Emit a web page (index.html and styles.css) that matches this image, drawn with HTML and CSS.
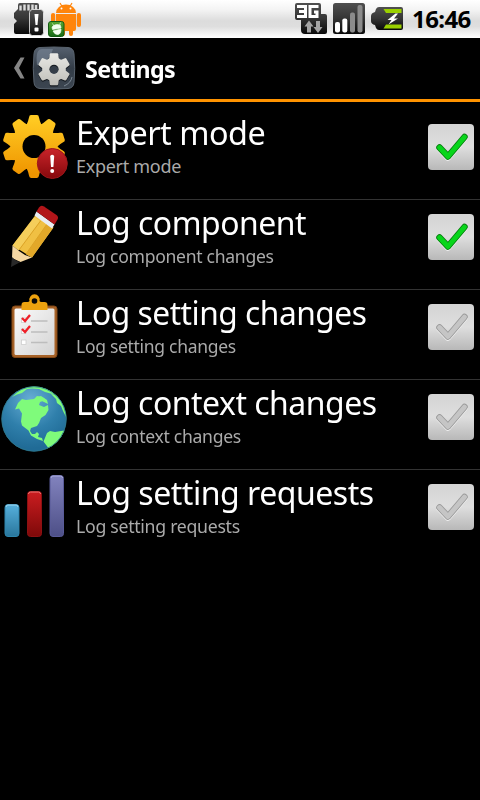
FILE: index.html
```html
<!DOCTYPE html>
<html lang="en">
<head>
<meta charset="utf-8">
<title>Settings</title>
<link rel="stylesheet" href="styles.css">
</head>
<body>
<header class="status">
  <svg class="status-left" width="90" height="38" viewBox="0 0 90 38">
    <defs>
      <linearGradient id="dark" x2="0" y2="1"><stop stop-color="#505050"/><stop offset=".5" stop-color="#343434"/><stop offset="1" stop-color="#080808"/></linearGradient>
      <linearGradient id="leaf" x2="0" y2="1"><stop stop-color="#57a832"/><stop offset="1" stop-color="#176b17"/></linearGradient>
    </defs>
    <path d="M20 3h17q2 0 2 2v27q0 2-2 2H16q-2 0-2-2V24l3-3-3-3v-5l4-4V5q0-2 2-2z" fill="url(#dark)"/>
    <path d="M20.500 5.500v5M24.500 4.500v6M28.500 4.500v6M32.500 4.500v6M36 5v5" stroke="#ddd" stroke-width="2.400"/>
    <rect x="29.500" y="9.500" width="14" height="26" rx="3" fill="url(#dark)" stroke="#eee" stroke-width=".8"/>
    <path d="M34.500 14h4l-1 11h-2z" fill="#fff"/><rect x="34.500" y="27.500" width="4" height="4" rx="1" fill="#fff"/>
    <g fill="#ff850b">
      <path d="M56 13a10 8.500 0 0 1 20 0z"/>
      <path d="M60 3l3 5M72 3l-3 5" stroke="#ff850b" stroke-width="1.200"/>
      <path d="M56 14h20v15q0 2-2 2h-1v3q0 2-2 2t-2-2v-3h-4v3q0 2-2 2t-2-2v-3h-3q-2 0-2-2z"/>
      <rect x="51" y="13" width="4.200" height="14" rx="2.100"/><rect x="76.800" y="13" width="4.200" height="14" rx="2.100"/>
    </g>
    <circle cx="61.500" cy="8.500" r="1" fill="#fff"/><circle cx="70.500" cy="8.500" r="1" fill="#fff"/>
    <rect x="48.500" y="21.500" width="15.500" height="15" rx="2.500" fill="url(#leaf)" stroke="#125a12"/>
    <path d="M52 27q4-4 8.500-1.500l.5 2.500-8.500 1.500zM53 31l8-2q0 5-3 5.500t-5-3.500zM52.500 23.500l1.500 2.500M60.500 22.500l-1 3" fill="#f4fff0" stroke="#f4fff0" stroke-width=".7"/>
  </svg>
  <div class="status-right">
    <svg width="112" height="38" viewBox="292 0 112 38">
      <path d="M297 3h22q2 0 2 2v9h4q2 0 2 2v16q0 2-2 2h-20q-4 0-4-4V20h-4q-2 0-2-2V5q0-2 2-2z" fill="url(#dark)"/>
      <path d="M297 6.500h8.500v10H297M299 11.500h6.500M318.500 6.500h-8.500v10h7v-4.500h-3" fill="none" stroke="#fff" stroke-width="3"/>
      <path d="M309 20.500l4.500 6h-2.500v6h-4v-6h-2.500zM318 33l4.500-6h-2.500v-6h-4v6h-2.500z" fill="#a5a5a5"/>
      <rect x="333" y="3" width="32" height="31" rx="2.500" fill="url(#dark)"/>
      <g fill="#fff"><rect x="335" y="22" width="5" height="10.500" rx="2"/><rect x="342.300" y="18.500" width="5" height="14" rx="2"/></g>
      <g fill="#8b8b8b"><rect x="350" y="12.500" width="5" height="20" rx="2"/><rect x="357.500" y="5" width="5" height="27.500" rx="2"/></g>
      <path d="M379 7h22q2 0 2 2v19q0 2-2 2h-22q-2 0-3-2l-1-3q-4-1-4-4v-5q0-3 4-4l1-3q1-2 3-2z" fill="url(#dark)"/>
      <path d="M383.500 9h18v4h-15.500zM386 24.500h15.500v4h-18z" fill="#9ad000"/>
      <path d="M395.500 13.500l-8 6.500h4l-3 4.500 9.500-6h-4l4-5z" fill="#fff"/>
    </svg>
    <span class="clock">16:46</span>
  </div>
</header>

<nav class="bar">
  <svg width="78" height="61" viewBox="0 38 78 61">
    <defs>
      <linearGradient id="tile" x2="0" y2="1"><stop stop-color="#56616f"/><stop offset=".5" stop-color="#333c47"/><stop offset="1" stop-color="#3c4651"/></linearGradient>
      <linearGradient id="silver" x2="0" y2="1"><stop stop-color="#eeeeea"/><stop offset="1" stop-color="#b9b9b3"/></linearGradient>
      <mask id="gear6" maskUnits="userSpaceOnUse" x="-20" y="-20" width="40" height="40">
        <g fill="#fff"><circle r="11.800"/>
          <path id="t6" d="M-5-9l.8-6q.2-1 1-1h6.400q.8 0 1 1l.8 6z"/>
          <use href="#t6" transform="rotate(60)"/><use href="#t6" transform="rotate(120)"/><use href="#t6" transform="rotate(180)"/><use href="#t6" transform="rotate(240)"/><use href="#t6" transform="rotate(300)"/>
        </g><circle r="4.600" fill="#000"/>
      </mask>
    </defs>
    <path d="M24.500 57.500h-4L14 68l6.500 10.500h4L19 68z" fill="#858585"/>
    <path d="M40 47.500q14-1 28 0 5.500.5 6 6 1.500 15 0 29-.5 5.500-6 6-14 1-28 0-5.500-.5-6-6-1.500-14 0-29 .5-5.500 6-6z" fill="url(#tile)" stroke="#59636e"/>
    <path d="M37 65q-2-16 5-16h11q-3 12-16 16z" fill="#7b8999" opacity=".6"/>
    <path d="M64 86q7-3 8-9" fill="none" stroke="#7b8792" stroke-width="1"/>
    <g transform="translate(54 70.500)"><rect x="-20" y="-20" width="40" height="40" fill="#171c22" mask="url(#gear6)"/></g>
    <g transform="translate(54 69.300)"><rect x="-20" y="-20" width="40" height="40" fill="url(#silver)" mask="url(#gear6)"/></g>
  </svg>
  <h1>Settings</h1>
</nav>

<ul class="list">
  <li class="row">
    <svg class="icon" width="72" height="89" viewBox="0 110 72 89">
      <defs>
        <linearGradient id="gold" x2="0" y2="1"><stop offset=".1" stop-color="#ffca22"/><stop offset=".9" stop-color="#ef9500"/></linearGradient>
        <linearGradient id="red" x2="0" y2="1"><stop stop-color="#c9242a"/><stop offset="1" stop-color="#85080c"/></linearGradient>
        <mask id="gear10" maskUnits="userSpaceOnUse" x="-34" y="-34" width="68" height="68">
          <g fill="#fff"><circle r="23.500"/>
            <path id="t10" d="M-7.500-21.500Q-5.800-25-5-29q.3-2.400 2-2.400h6q1.700 0 2 2.400.8 4 2.500 7.500z"/>
            <use href="#t10" transform="rotate(36)"/><use href="#t10" transform="rotate(72)"/><use href="#t10" transform="rotate(108)"/><use href="#t10" transform="rotate(144)"/><use href="#t10" transform="rotate(180)"/><use href="#t10" transform="rotate(216)"/><use href="#t10" transform="rotate(252)"/><use href="#t10" transform="rotate(288)"/><use href="#t10" transform="rotate(324)"/>
          </g><circle r="11.500" fill="#000"/>
        </mask>
      </defs>
      <g transform="translate(34 146.500)"><rect x="-34" y="-34" width="68" height="68" fill="url(#gold)" mask="url(#gear10)"/></g>
      <circle cx="52.300" cy="163.500" r="15" fill="url(#red)" stroke="#a0171b"/>
      <path d="M50.200 156q2-2.500 4 0l-.8 11h-2.400z" fill="#fff"/><circle cx="52.200" cy="171" r="2" fill="#fff"/>
    </svg>
    <div class="text"><div class="title w1">Expert mode</div><div class="sub s1">Expert mode</div></div>
    <svg class="check on" width="46" height="46" viewBox="0 0 46 46"><path class="lip" d="M11.500 24.500l8.500 9L36.500 14"/><path class="edge" d="M11.500 23.500l8.500 9L36.500 13"/><path class="tick" d="M11.500 23.500l8.500 9L36.500 13"/></svg>
  </li>
  <li class="row">
    <svg class="icon" width="72" height="89" viewBox="0 200 72 89">
      <path d="M35.500 215L53.500 227.500 32 257.500 12.500 245.500z" fill="#f0c043"/>
      <path d="M34.500 217l5.500 4-21.500 29.500-6-5z" fill="#f5ce5b"/><path d="M47 224l6 4-21 29.500-6-3z" fill="#e2a829"/><path d="M40.500 221L19 250M47 224L26 254" stroke="#dca326" stroke-width="1"/>
      <path d="M12.500 245.500l6.500 5.500 6 4 7 2.500-11.500 4.500-8.500-4z" fill="#f5d7a3"/>
      <path d="M12 257q4 4.500 8.500 5L11 267z" fill="#292929"/>
      <path d="M34.500 215.500l2-4 18 13-2.500 4z" fill="#e9ecf2"/>
      <path d="M36.500 211.500l2.500-4q2-3 5-1l12.500 8.500q2.500 2 1 4.500l-3 5z" fill="#b21519"/>
    </svg>
    <div class="text"><div class="title w2">Log component</div><div class="sub s2">Log component changes</div></div>
    <svg class="check on" width="46" height="46" viewBox="0 0 46 46"><path class="lip" d="M11.500 24.500l8.500 9L36.500 14"/><path class="edge" d="M11.500 23.500l8.500 9L36.500 13"/><path class="tick" d="M11.500 23.500l8.500 9L36.500 13"/></svg>
  </li>
  <li class="row">
    <svg class="icon" width="72" height="89" viewBox="0 290 72 89">
      <defs><linearGradient id="paper" x2="1" y2="1"><stop stop-color="#fafafa"/><stop offset="1" stop-color="#d3d3d3"/></linearGradient></defs>
      <rect x="12" y="306" width="45" height="51.500" rx="3" fill="#a66228" stroke="#804615"/>
      <rect x="14.500" y="308.500" width="40" height="46.500" rx="1.500" fill="url(#paper)"/>
      <path d="M21.500 310v-5q0-3 3-3h3q1.500 0 2-1a5.200 5.200 0 1 1 10 0q.5 1 2 1h3q3 0 3 3v5z" fill="#eda20f"/>
      <circle cx="34.500" cy="301" r="2.800" fill="#090909"/>
      <path d="M31 321h16.500M31 332h16.500M31 342.500h16.500" stroke="#bdbdbd" stroke-width="1.500"/>
      <g fill="#fff" stroke="#c9c9c9" stroke-width=".7"><rect x="21.500" y="318" width="4.500" height="4.500"/><rect x="21.500" y="329" width="4.500" height="4.500"/><rect x="21.500" y="340" width="4.500" height="4.500"/></g>
      <path d="M22 318l3 3 5-6M22 329l3 3 5-6" fill="none" stroke="#ef2029" stroke-width="2.300"/>
    </svg>
    <div class="text"><div class="title w3">Log setting changes</div><div class="sub s3">Log setting changes</div></div>
    <svg class="check" width="46" height="46" viewBox="0 0 46 46"><path class="lip" d="M11.500 24.500l8.500 9L36.500 14"/><path class="edge" d="M11.500 23.500l8.500 9L36.500 13"/><path class="tick" d="M11.500 23.500l8.500 9L36.500 13"/></svg>
  </li>
  <li class="row">
    <svg class="icon" width="72" height="89" viewBox="0 380 72 89">
      <defs><radialGradient id="sea" cx=".45" cy=".2" r=".75"><stop stop-color="#67add5"/><stop offset=".6" stop-color="#2f7fab"/><stop offset="1" stop-color="#206b96"/></radialGradient>
      <clipPath id="globe"><circle cx="34" cy="419" r="32.500"/></clipPath></defs>
      <circle cx="34" cy="419" r="32.500" fill="url(#sea)"/>
      <g clip-path="url(#globe)" fill="#7ffb7b">
        <path d="M12 397q9-9 20-11h12l13 7-1 2-11-3-6-3-7-.5-5 .5-5 4-5 1.500z"/>
        <path d="M18 403l4-4 4 1 8-1 3-3 7 2 3 4-4-1-3 1-1 3 5 2 4-2 .5 5-3 5-4.500 3-2 5-2 3-6 2-1 3 2 3h3l2-2 2 2-1 3 4 1 1 3-6-2-6-3.500-2.500-5-6.500-5-1-4 1-8-3-5-4 1z"/>
        <path d="M36 397l5-1 6 4 1 4-6-3z"/>
        <path d="M51 394l6 1q6 8 9 19l1 5-4-8-2-5-4-3-1-4z"/>
        <path d="M47 433l3-2 5 1 9-1.500 4 2-9 20-16 3 4-6 1-2-4.500-6z"/>
      </g>
      <circle cx="34" cy="419" r="32.200" fill="none" stroke="#2f7a8b" stroke-width=".8"/>
    </svg>
    <div class="text"><div class="title w4">Log context changes</div><div class="sub s4">Log context changes</div></div>
    <svg class="check" width="46" height="46" viewBox="0 0 46 46"><path class="lip" d="M11.500 24.500l8.500 9L36.500 14"/><path class="edge" d="M11.500 23.500l8.500 9L36.500 13"/><path class="tick" d="M11.500 23.500l8.500 9L36.500 13"/></svg>
  </li>
  <li class="row">
    <svg class="icon" width="72" height="89" viewBox="0 470 72 89">
      <defs>
        <linearGradient id="b1" x2="0" y2="1"><stop stop-color="#56b0dc"/><stop offset="1" stop-color="#29769c"/></linearGradient>
        <linearGradient id="b2" x2="0" y2="1"><stop stop-color="#cb1d20"/><stop offset="1" stop-color="#7e0909"/></linearGradient>
        <linearGradient id="b3" x2="0" y2="1"><stop stop-color="#8283be"/><stop offset="1" stop-color="#4d4f87"/></linearGradient>
      </defs>
      <rect x="5" y="504.500" width="14" height="32" rx="3" fill="url(#b1)" stroke="#2e86ae"/>
      <rect x="27.500" y="491.500" width="14" height="45" rx="3" fill="url(#b2)" stroke="#8d1012"/>
      <rect x="50" y="475.500" width="13.500" height="61" rx="3" fill="url(#b3)" stroke="#595b99"/>
      <g fill="none" stroke-width="1"><path d="M6 507q0-2 2-2h8q2 0 2 2" stroke="#a3d9f1"/><path d="M28.500 494q0-2 2-2h8q2 0 2 2" stroke="#f07878"/><path d="M51 478q0-2 2-2h7.500q2 0 2 2" stroke="#b0b1df"/></g>
    </svg>
    <div class="text"><div class="title w5">Log setting requests</div><div class="sub s5">Log setting requests</div></div>
    <svg class="check" width="46" height="46" viewBox="0 0 46 46"><path class="lip" d="M11.500 24.500l8.500 9L36.500 14"/><path class="edge" d="M11.500 23.500l8.500 9L36.500 13"/><path class="tick" d="M11.500 23.500l8.500 9L36.500 13"/></svg>
  </li>
</ul>
</body>
</html>
```
FILE: styles.css
```css
* { box-sizing: border-box; }
body {
  margin: 0;
  width: 480px;
  height: 800px;
  overflow: hidden;
  background: #000;
  color: #fff;
  font-family: "Noto Sans", "Open Sans", sans-serif;
}
svg { display: block; flex: none; }
.status {
  display: flex;
  justify-content: space-between;
  height: 38px;
  background: linear-gradient(#fff 0, #f4f4f4 25%, #dcdcdc 55%, #dedede 70%, #fafafa 95%, #fff);
}
.status-right { display: flex; width: 188px; }
.clock {
  margin-left: 8px;
  color: #000;
  font-size: 24px;
  font-weight: 700;
  line-height: 38px;
  letter-spacing: -0.6px;
  white-space: nowrap;
}
.bar {
  display: flex;
  align-items: center;
  height: 64px;
  border-bottom: 3px solid #ff9300;
}
.bar h1 {
  margin: 0 0 0 7px;
  font-size: 24px;
  line-height: 60px;
  letter-spacing: -0.65px;
  transform: scaleX(.967);
  transform-origin: left;
}
.list {
  margin: 0;
  padding: 8px 0 0;
  list-style: none;
}
.row {
  display: flex;
  height: 90px;
  padding-right: 6px;
  border-bottom: 1px solid #333;
}
.row:last-child { border-bottom: 0; }
.text {
  flex: 1;
  padding: 3px 0 0 4px;
  white-space: nowrap;
}
.title, .sub { width: max-content; transform-origin: left; }
.title { font-size: 33px; line-height: 40px; letter-spacing: -0.5px; }
.sub { font-size: 18px; line-height: 26px; color: #aaa; letter-spacing: -0.3px; }
.w1 { transform: scaleX(.98); }
.w2 { transform: scaleX(.967); }
.w3 { transform: scaleX(.96); }
.w4 { transform: scaleX(.968); }
.w5 { transform: scaleX(.971); }
.s2 { transform: scaleX(.976); }
.s3 { transform: scaleX(.972); }
.s4 { transform: scaleX(.977); }
.s5 { transform: scaleX(.983); }
.check {
  margin-top: 14px;
  border-radius: 4px;
  background: linear-gradient(#d4d4d4, #dedede 50%, #b8b8b8);
  fill: none;
  stroke-linecap: round;
  stroke-linejoin: round;
}
.lip { stroke: #f0f0f0; stroke-width: 6.5px; }
.edge { stroke: #999; stroke-width: 6.5px; }
.tick { stroke: #c5c5c5; stroke-width: 4.8px; }
.on .edge { stroke: #087c10; }
.on .tick { stroke: #08d51b; }
```
